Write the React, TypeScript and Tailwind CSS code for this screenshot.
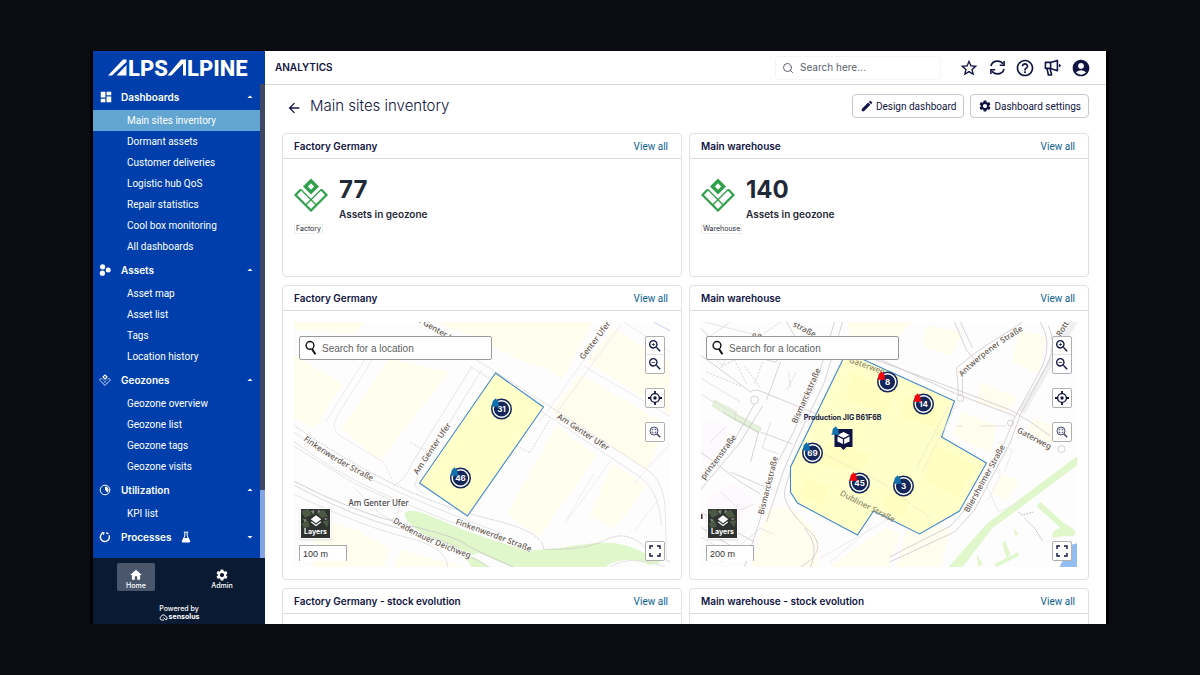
import { useState } from "react";
import type { ReactNode } from "react";
import {
    MdAccountCircle,
    MdArrowBack,
    MdArrowDropDown,
    MdArrowDropUp,
    MdDashboard,
    MdEdit,
    MdHelpOutline,
    MdHome,
    MdLayers,
    MdSettings,
    MdStarBorder,
    MdZoomIn,
    MdZoomOut,
} from "react-icons/md";
import { Search } from "lucide-react";

type NavGroup = {
    label: string;
    icon: ReactNode;
    items: string[];
    beta?: boolean;
};

function GeozoneIcon({ className, hole = "#fff" }: { className: string; hole?: string }) {
    return (
        <svg viewBox="0 0 34 34" className={className} fill="none" stroke="currentColor" aria-hidden="true">
            <path d="M17 .5 25 8.5 17 16.5 9 8.5Z" fill="currentColor" stroke="none" />
            <path d="M17 5.3 20.2 8.5 17 11.7 13.8 8.5Z" fill={hole} stroke="none" />
            <path d="M6.8 11.5 1.5 17 17 32.5 32.5 17 27.2 11.5" strokeWidth="2.2" />
            <path d="M6.8 11.5 22.5 27.2M27.2 11.5 11.5 27.2" strokeWidth="1.3" />
        </svg>
    );
}

function AssetsIcon() {
    return (
        <svg viewBox="0 0 12 12" className="size-3" fill="currentColor" aria-hidden="true">
            <circle cx="3.6" cy="2.8" r="2.6" />
            <circle cx="3.4" cy="9.2" r="2.6" />
            <circle cx="9.2" cy="6" r="2.5" />
        </svg>
    );
}

function UtilizationIcon() {
    return (
        <svg viewBox="0 0 12 12" className="size-3" fill="none" stroke="currentColor" aria-hidden="true">
            <circle cx="6" cy="6" r="4.8" />
            <path d="M6 2.4A3.6 3.6 0 0 1 8.5 8.6L6 6Z" fill="currentColor" stroke="none" />
        </svg>
    );
}

function ProcessesIcon() {
    return (
        <svg viewBox="0 0 12 12" className="size-3" fill="none" stroke="currentColor" strokeWidth="1.4" aria-hidden="true">
            <path d="M4.6 1.7A4.5 4.5 0 1 0 10 4.2" />
            <path d="M2.6 1.2 5.2 1.6 4.4 4" strokeWidth="1" />
            <path d="M7.2 1.6 9.4 2.8" />
        </svg>
    );
}

function FlaskIcon() {
    return (
        <svg viewBox="0 0 10 12" className="h-3 w-2.5" fill="none" stroke="currentColor" aria-hidden="true">
            <path d="M2.8 1.2H7.2M3.8 1.2V5L1.2 10.2Q1 11 1.8 11H8.2Q9 11 8.8 10.2L6.2 5V1.2" />
            <path d="M2.6 7H7.4L9 10.2Q9 11 8.2 11H1.8Q1 11 1 10.2Z" fill="currentColor" stroke="none" />
        </svg>
    );
}

function SyncIcon() {
    return (
        <svg viewBox="0 0 18 18" className="size-[17px]" fill="none" stroke="currentColor" strokeWidth="1.7" aria-hidden="true">
            <path d="M2 7.4C3 4.2 5.7 2.2 9 2.2c2.4 0 4.4 1 5.8 3M16 10.6c-1 3.2-3.7 5.2-7 5.2-2.4 0-4.4-1-5.8-3" />
            <path d="M11.4 6.6H16V2M6.6 11.4H2V16" />
        </svg>
    );
}

function MegaphoneIcon() {
    return (
        <svg viewBox="0 0 18 18" className="size-[18px]" fill="none" stroke="currentColor" strokeWidth="1.6" strokeLinejoin="round" aria-hidden="true">
            <path d="M1.4 3.4H6.6L13.4 1.4V11.8L6.6 9.4H1.4Z" />
            <path d="M6.6 3.4V9.4M3 9.4 4.4 16H7.6L6 9.4" />
            <path d="M15.4 5.2Q17.4 6.6 15.4 8Z" fill="currentColor" strokeWidth="1" />
        </svg>
    );
}

function LocateIcon() {
    return (
        <svg viewBox="0 0 14 14" className="size-3.5" fill="none" stroke="currentColor" aria-hidden="true">
            <circle cx="7" cy="7" r="4.4" strokeWidth="1.4" />
            <circle cx="7" cy="7" r="1.7" fill="currentColor" stroke="none" />
            <path d="M7 0V3M7 11V14M0 7H3M11 7H14" strokeWidth="1.8" />
        </svg>
    );
}

function FitIcon() {
    return (
        <svg viewBox="0 0 12 12" className="size-3" fill="none" stroke="#33385c" aria-hidden="true">
            <circle cx="5" cy="5" r="4" strokeWidth=".9" />
            <path d="M8 8 11.2 11.2" strokeWidth="1.4" />
            <path d="M3.2 4.4V3.2H4.4M5.6 3.2H6.8V4.4M6.8 5.6V6.8H5.6M4.4 6.8H3.2V5.6" strokeWidth=".9" />
        </svg>
    );
}

function FullscreenIcon() {
    return (
        <svg viewBox="0 0 12 12" className="size-3" fill="none" stroke="currentColor" strokeWidth="1.4" aria-hidden="true">
            <path d="M1 4V1H4M8 1H11V4M11 8V11H8M4 11H1V8" />
        </svg>
    );
}

function BrandLogo() {
    return (
        <svg viewBox="0 0 142 34" className="h-[34px] w-[142px]" fill="#fff" role="img" aria-label="ALPSALPINE">
            <path d="M0 24.5 15 8.5H18.5V11L4 24.5Z" />
            <path d="M8.5 24.5 18.5 14V24.5Z" />
            <path d="M59.5 24.5 73 8.5H78V24.5H75V12.5L63.5 24.5Z" />
            <text x="20" y="24.5" className="font-['Roboto'] text-[22px] font-extrabold">LPS</text>
            <text x="79" y="24.5" className="font-['Roboto'] text-[22px] font-extrabold">LPINE</text>
        </svg>
    );
}

const navGroups: NavGroup[] = [
    {
        label: "Dashboards",
        icon: <MdDashboard className="size-3.5" />,
        items: [
            "Main sites inventory",
            "Dormant assets",
            "Customer deliveries",
            "Logistic hub QoS",
            "Repair statistics",
            "Cool box monitoring",
            "All dashboards",
        ],
    },
    { label: "Assets", icon: <AssetsIcon />, items: ["Asset map", "Asset list", "Tags", "Location history"] },
    {
        label: "Geozones",
        icon: <GeozoneIcon className="size-3" hole="#003fab" />,
        items: ["Geozone overview", "Geozone list", "Geozone tags", "Geozone visits"],
    },
    { label: "Utilization", icon: <UtilizationIcon />, items: ["KPI list"] },
    { label: "Processes", icon: <ProcessesIcon />, items: [], beta: true },
];

function Sidebar() {
    const [active, setActive] = useState("Main sites inventory");

    return (
        <aside className="flex w-[172px] shrink-0 flex-col bg-[#003fab] text-white">
            <div className="flex h-[33px] shrink-0 items-center pl-[15px]">
                <BrandLogo />
            </div>
            <div className="flex min-h-0 flex-1">
                <nav className="min-w-0 flex-1 overflow-hidden">
                    {navGroups.map((group) => (
                        <section key={group.label}>
                            <button type="button" className="flex h-[26px] w-full items-center pr-1 pl-1.5 text-left text-[10px] font-semibold">
                                <span className="flex w-[22px] items-center">{group.icon}</span>
                                {group.label}
                                {group.beta && (
                                    <span className="ml-2.5">
                                        <FlaskIcon />
                                    </span>
                                )}
                                <span className="ml-auto">
                                    {group.beta ? <MdArrowDropDown className="size-3" /> : <MdArrowDropUp className="size-3" />}
                                </span>
                            </button>
                            <ul>
                                {group.items.map((item) => (
                                    <li key={item}>
                                        <a
                                            href="#"
                                            onClick={() => setActive(item)}
                                            className={`flex h-[21px] items-center pl-[34px] font-['Roboto',sans-serif] text-[10px] ${item === active ? "bg-[#62a5d1]" : ""}`}
                                        >
                                            {item}
                                        </a>
                                    </li>
                                ))}
                            </ul>
                        </section>
                    ))}
                </nav>
                <div className="flex w-[5px] flex-col bg-[#84a4e6]">
                    <div className="h-6/7 bg-[#3e4763]" />
                </div>
            </div>
            <div className="flex h-[66px] shrink-0 flex-col bg-[#0b1a33] pt-[5px]">
                <div className="grid grid-cols-2 justify-items-center text-[7px] leading-[8px] font-medium">
                    <button type="button" className="flex h-7 w-[38px] flex-col items-center justify-center rounded-xs bg-[#4a566c] pt-1">
                        <MdHome className="size-3.5" />
                        Home
                    </button>
                    <button type="button" className="flex h-7 w-[38px] flex-col items-center justify-center pt-1">
                        <MdSettings className="size-3.5" />
                        Admin
                    </button>
                </div>
                <div className="mt-auto flex flex-col items-center pb-[3px] text-[7px] leading-[8px] font-medium">
                    Powered by
                    <span className="flex items-center gap-px font-bold">
                        <svg viewBox="0 0 9 7" className="h-[7px] w-[9px]" fill="none" stroke="currentColor" aria-hidden="true">
                            <path d="M5 6H2.4A1.8 1.8 0 0 1 2.2 2.6 2.3 2.3 0 0 1 6.6 2.4 1.9 1.9 0 0 1 7 6L4.4 3.6" />
                        </svg>
                        sensolus
                    </span>
                </div>
            </div>
        </aside>
    );
}

function TopBar() {
    return (
        <header className="flex h-[34px] shrink-0 items-center border-b border-[#d3d5da] pr-[15px] pl-2.5">
            <h2 className="text-[10px] font-semibold">ANALYTICS</h2>
            <label className="ml-auto flex h-6 w-[166px] items-center gap-1.5 rounded border border-[#f3f4f6] px-1.5 text-[#5b5f6b]">
                <Search className="size-3" strokeWidth={2} />
                <input
                    type="text"
                    aria-label="Search"
                    placeholder="Search here..."
                    className="min-w-0 flex-1 text-[10px] outline-none placeholder:text-[#5b5f6b]"
                />
            </label>
            <div className="ml-[18px] flex items-center gap-2">
                <button type="button" aria-label="Favourites" className="flex size-5 items-center justify-center">
                    <MdStarBorder className="size-5" />
                </button>
                <button type="button" aria-label="Refresh" className="flex size-5 items-center justify-center">
                    <SyncIcon />
                </button>
                <button type="button" aria-label="Help" className="flex size-5 items-center justify-center">
                    <MdHelpOutline className="size-5" />
                </button>
                <button type="button" aria-label="Announcements" className="flex size-5 items-center justify-center">
                    <MegaphoneIcon />
                </button>
                <button type="button" aria-label="Account" className="flex size-5 items-center justify-center">
                    <MdAccountCircle className="size-5" />
                </button>
            </div>
        </header>
    );
}

function Card({ title, children }: { title: string; children?: ReactNode }) {
    return (
        <section className="rounded border border-[#dfe1e6] bg-white">
            <div className="flex h-[25px] items-center justify-between border-b border-[#d9dbe0] pr-[13px] pl-[11px] text-[10px]">
                <h3 className="font-semibold">{title}</h3>
                <a href="#" className="font-['Roboto',sans-serif] text-[#0b6190]">View all</a>
            </div>
            {children}
        </section>
    );
}

function CountWidget({ count, geozone }: { count: number; geozone: string }) {
    return (
        <div className="flex h-[117px] gap-[11px] pt-[19px] pl-[11px] text-[#1f2937]">
            <div className="flex w-[34px] flex-col items-start gap-3">
                <GeozoneIcon className="size-[34px] text-[#2fa04a]" />
                <span className="border border-[#f0f0ea] px-px text-[7px] leading-[8px]">{geozone}</span>
            </div>
            <div>
                <p className="text-2xl leading-6 font-bold">{count}</p>
                <p className="mt-1.5 text-[10px] leading-3 font-semibold">Assets in geozone</p>
            </div>
        </div>
    );
}

function Bell({ x, y, alert }: { x: number; y: number; alert?: boolean }) {
    return (
        <path
            d={`M${x} ${y - 4.5}q.9 0 .9 .9 2.2 .7 2.2 3.2v2.2l.9 1.2v.8h-8v-.8l.9-1.2v-2.2q0-2.5 2.2-3.2 0-.9 .9-.9z`}
            fill={alert ? "#f5060a" : "#1071ae"}
        />
    );
}

function Marker({ x, y, label, alert }: { x: number; y: number; label: string; alert?: boolean }) {
    return (
        <g>
            <circle cx={x} cy={y} r="10.5" fill="#14265a" />
            <circle cx={x} cy={y} r="8.3" fill="none" stroke="#fff" strokeWidth="1.4" />
            <text x={x} y={y + 3} textAnchor="middle" fill="#fff" className="text-[8px] font-bold">{label}</text>
            <Bell x={x - 6} y={y - 6} alert={alert} />
        </g>
    );
}

function MapFrame({ name, scale, children }: { name: string; scale: string; children: ReactNode }) {
    return (
        <div className="relative m-[11px] mb-3 h-[245px] overflow-hidden">
            <svg viewBox="0 0 377 245" preserveAspectRatio="xMidYMid slice" className="size-full bg-[#fefdfd]" role="img" aria-label={`${name} map`}>
                {children}
            </svg>
            <label className="absolute top-3.5 left-[5px] flex h-6 w-[193px] items-center gap-1 rounded-xs border border-[#9a9a9a] bg-white px-1 text-[#111]">
                <svg viewBox="0 0 14 16" className="h-4 w-3.5" fill="none" stroke="currentColor" aria-hidden="true">
                    <circle cx="6" cy="5.4" r="3.9" strokeWidth="1.4" />
                    <path d="M8 9 11.4 14.2" strokeWidth="2" />
                </svg>
                <input
                    type="text"
                    aria-label={`Search for a location in ${name}`}
                    placeholder="Search for a location"
                    className="min-w-0 flex-1 font-['Liberation_Sans',sans-serif] text-[10px] outline-none placeholder:text-[#5f5f5f]"
                />
            </label>
            <div className="absolute top-3.5 right-[5px] flex flex-col gap-3.5">
                <div className="flex w-5 flex-col divide-y divide-[#e5e5e5] rounded-xs border border-[#b0b0b0] bg-white">
                    <button type="button" aria-label="Zoom in" className="flex h-[18px] items-center justify-center">
                        <MdZoomIn className="size-4" />
                    </button>
                    <button type="button" aria-label="Zoom out" className="flex h-[18px] items-center justify-center">
                        <MdZoomOut className="size-4" />
                    </button>
                </div>
                <button type="button" aria-label="Show my location" className="flex size-5 items-center justify-center rounded-xs border border-[#b0b0b0] bg-white">
                    <LocateIcon />
                </button>
                <button type="button" aria-label="Fit to assets" className="flex size-5 items-center justify-center rounded-xs border border-[#b0b0b0] bg-white">
                    <FitIcon />
                </button>
            </div>
            <button
                type="button"
                className="absolute bottom-7 left-1.5 flex size-[31px] flex-col items-center justify-end border border-white bg-[#2f3330] text-[7px] leading-[8px] font-bold text-white shadow"
            >
                <svg viewBox="0 0 30 30" className="absolute inset-0 size-full" aria-hidden="true">
                    <path d="M0 2 8 0 11 6 4 9ZM16 3 24 1 28 8 21 9ZM1 15 7 12 9 18 3 20ZM22 13 29 12 27 19Z" fill="#4c5a45" />
                    <path d="M10 2 14 1 13 6ZM2 10 6 11 4 14ZM24 9 28 10 25 12ZM18 0 20 3 17 4Z" fill="#87877f" />
                </svg>
                <MdLayers className="relative size-3.5" />
                <span className="relative pb-0.5">Layers</span>
            </button>
            <div className="absolute bottom-1.5 left-[5px] h-4 w-12 border border-b-0 border-[#a9a9a9] bg-white pl-[3px] font-['Liberation_Sans',sans-serif] text-[9px] leading-4 text-[#333]">
                {scale}
            </div>
            <button type="button" aria-label="Full screen" className="absolute right-[5px] bottom-1.5 flex size-5 items-center justify-center rounded-xs border border-[#b0b0b0] bg-white">
                <FullscreenIcon />
            </button>
        </div>
    );
}

function FactoryMap() {
    return (
        <MapFrame name="Factory Germany" scale="100 m">
            <g fill="#fffdee">
                <path d="M0 0H72L60 12 0 8ZM0 33 49 62 22 106 0 96ZM96 37 156 50 86 139 48 107Z" />
                <path d="M20 195 66 209 96 227 90 245H20ZM108 228 170 245H100Z" />
                <path d="M140 0H299L269 57 258 50 250 46 236 42 200 26 186 17Z" />
                <path d="M319 7 377 40V92L293 40ZM286 52 372 102 354 148 258 90Z" />
                <path d="M263 104 303 134 246 215 213 192ZM319 142 353 164 321 207 296 194Z" />
            </g>
            <path d="M111 193C112 187 122 188 135 193L168 207C195 217 230 229 245 228 275 226 296 219 318 221 340 223 354 232 368 241L356 243Q336 234 318 241L312 245H218L186 231 170 235Q176 240 178 245L196 245 186 238 150 222Q116 208 111 193Z" fill="#e0f6cb" />
            <g fill="none" stroke="#e0dddd" strokeWidth=".8">
                <path d="M0 103Q50 138 100 162T200 198 250 227Q290 229 312 218T352 226L377 240" stroke="#c4bfbf" strokeDasharray="2 1" />
                <path d="M0 110Q50 146 105 170T210 212" />
                <path d="M0 119Q40 150 90 172T180 208" />
                <path d="M0 124 60 161 100 179Q108 183 104 192" />
                <path d="M0 159Q60 190 110 202T170 221T220 245" stroke="#c6c6c6" />
                <path d="M0 163Q60 195 108 207T166 227 196 245" stroke="#d0d0d0" />
                <path d="M0 172Q70 205 112 215T154 245" />
                <path d="M60 165Q70 175 80 186T120 206" />
                <path d="M178 45 118 142Q112 158 100 164M188 48 126 150 121 164 130 172" />
                <path d="M90 20 46 90Q34 108 50 116L90 140 100 160M84 17 32 100" stroke="#e9e5eb" />
                <path d="M180 36 262 88 354 148Q372 160 372 195L373 240" />
                <path d="M176 44 258 96 348 156Q366 170 368 204" />
                <path d="M318 0 246 100M328 2 262 92M290 44 376 94M236 75 170 160" stroke="#e9e5eb" />
                <path d="M256 98 236 131 224 124" stroke="#ccc5b5" strokeDasharray="1.5 1.5" />
                <path d="M318 138 274 198M376 122 340 162M366 176 340 210M300 152 272 200" stroke="#ece9ee" />
                <path d="M116 120 136 131" stroke="#c9c2c2" strokeDasharray="1.5 1.5" />
                <path d="M330 0 377 30" stroke="#e9e5eb" />
                <path d="M360 0 377 9" stroke="#b9c8f2" />
                <path d="M316 245Q338 232 372 245" />
            </g>
            <path d="M202 51 250 85 174 194 126 161Z" fill="#ffffc9" stroke="#4389ce" strokeWidth="1.1" />
            <g fill="none">
                <path id="f-street-1" d="M10 118Q40 141 100 170" />
                <path id="f-street-2" d="M162 202Q200 215 260 239" />
                <path id="f-street-3" d="M99 200Q130 222 200 244" />
            </g>
            <g fill="#62544b" stroke="#fff" strokeWidth="1.5" paintOrder="stroke" className="font-['Noto_Sans',sans-serif] text-[8px] font-medium">
                <text><textPath href="#f-street-1">Finkenwerder Straße</textPath></text>
                <text><textPath href="#f-street-2">Finkenwerder Straße</textPath></text>
                <text><textPath href="#f-street-3">Dradenauer Deichweg</textPath></text>
                <text transform="translate(124 153) rotate(-56)">Am Genter Ufer</text>
                <text transform="translate(55 184)" fill="#444">Am Genter Ufer</text>
                <text transform="translate(263 96) rotate(33)">Am Genter Ufer</text>
                <text transform="translate(290 38) rotate(-53)">Genter Ufer</text>
                <text transform="translate(116 -5) rotate(30)">Am Genter Ufer</text>
            </g>
            <Marker x={208} y={87} label="31" />
            <Marker x={167} y={156} label="46" />
        </MapFrame>
    );
}

function WarehouseMap() {
    return (
        <MapFrame name="Main warehouse" scale="200 m">
            <g fill="#fffdee">
                <path d="M66 190Q90 176 104 200 124 210 116 245H50ZM130 245 160 222 186 206 200 212 188 245Z" />
                <path d="M146 0H210L196 20 150 14ZM226 4 262 10 250 34 222 24ZM280 60 318 76 306 90 276 80Z" />
                <path d="M318 8 346 14 338 52 312 40ZM208 200 250 206 240 245H196ZM262 90 296 104 290 132 252 112Z" />
                <path d="M300 152 318 158 306 180 292 172ZM332 96 360 106 352 122 326 112Z" />
            </g>
            <path d="M0 100H24L34 126 0 140ZM6 176 30 160 54 178 40 200 14 196Z" fill="#fdf9fc" />
            <g fill="#e0f6cb">
                <path d="M14 78 36 90 34 98 12 84ZM36 92 61 106 58 111 34 98Z" fill="#e4f4da" stroke="#c6d9b9" strokeWidth=".7" strokeDasharray="1.5 1" />
                <path d="M377 134V143L322 184 292 206 262 245H248L286 202 318 178Z" />
                <path d="M340 180 362 200 374 208Q378 216 364 214L352 216Q350 208 360 206L336 184ZM304 218 310 232 306 236 302 222ZM313 206 318 212 315 214ZM294 242 318 230V234L296 245ZM276 232 282 242 278 245Z" />
            </g>
            <path d="M370 223 377 221V245H359Z" fill="#91bdf1" />
            <path d="M366 0H377L324 92 318 88 344 46Z" fill="#efefef" />
            <g fill="none" stroke="#cdc7cc" strokeWidth=".8">
                <path d="M134 0 116 60 92 112 72 150 60 196 44 245M142 0 124 60 100 110 84 146 66 200" />
                <path d="M120 84Q82 160 84 174T108 208 100 245M104 206Q120 224 110 245" />
                <path d="M0 33 50 70Q54 66 62 70L116 92M0 6 18 24 74 40 100 24 86 0M62 84 40 120 0 168M54 82 34 118 0 158" />
                <circle cx="54" cy="78" r="4" />
                <path d="M66 78 80 40M22 90 58 110 50 140M60 110 92 122M30 150 72 168M0 130 40 160 60 172M0 205 40 230M0 190 54 220" />
                <path d="M44 44 60 66M62 40 54 62M6 50 40 64M20 170 40 188 54 182M14 36 22 44 34 38 46 62" strokeDasharray="2 1.5" />
                <path d="M88 50 90 66M86 68 96 50M20 46 30 30 60 10M10 14 30 0M0 56 40 80M4 0 60 14 80 0M0 72 44 98M70 100 62 126 78 132M0 215 36 236M20 240 60 206 72 212M10 120 26 104M34 186 24 200 8 190" stroke="#e0dbe2" />
                <path d="M154 30 252 66 310 88 330 100 350 114M150 24 256 72 314 94" />
                <circle cx="260" cy="76" r="3.5" />
                <circle cx="310" cy="101" r="3" />
                <circle cx="361" cy="127" r="3.5" />
                <path d="M258 72 256 46 276 30 322 0M262 72 262 50 284 30M254 0 266 28 276 40M260 0 272 26" />
                <path d="M340 0Q352 20 342 44L314 96 304 120 268 184 250 204 189 235M348 4Q356 20 348 40L320 92 310 120 274 188 254 210 189 240" />
                <path d="M256 104H262M280 104H306" stroke="#bbb" strokeDasharray="1 1" />
                <path d="M280 140 300 152 288 178M296 120 312 128 304 150M280 150 298 190 320 180" stroke="#e8e4e4" />
                <path d="M130 240 170 206M120 236 190 196M189 50 160 120" stroke="#e8e4e4" />
                <path d="M318 190 322 193 333 190M324 196 334 206 342 219" stroke="#b5a99d" strokeDasharray="2 1" />
            </g>
            <path
                d="M146 30 199 54 254 79 241 115 286 141 259 189 219 212 173 189 157 213 97 181 90 170V145Z"
                fill="#ffffc9"
                stroke="#4389ce"
                strokeWidth="1.1"
            />
            <g fill="#fffdc0">
                <path d="M150 50 196 68 186 92 146 78ZM204 74 240 88 234 104 200 96ZM128 120 170 132 160 150 118 142Z" />
                <path d="M232 122 276 144 256 176 224 158ZM186 170 210 176 204 196 182 186ZM104 156 130 164 122 184 100 174Z" />
            </g>
            <path d="M248 84 216 146M254 86 222 150M100 120 180 160 230 196" fill="none" stroke="#eeeac8" strokeWidth=".8" />
            <rect x="0" y="192" width="2" height="5" fill="#472c3c" />
            <path id="w-street-1" d="M262 55Q282 32 330 4" fill="none" />
            <g fill="#62544b" stroke="#fff" strokeWidth="1.5" paintOrder="stroke" className="font-['Noto_Sans',sans-serif] text-[8px] font-medium">
                <text><textPath href="#w-street-1">Antwerpener Straße</textPath></text>
                <text transform="translate(96 102) rotate(-66)">Bismarckstraße</text>
                <text transform="translate(63 193) rotate(-76)">Bismarckstraße</text>
                <text transform="translate(4 158) rotate(-53)">prinzenstraße</text>
                <text transform="translate(92 4) rotate(28)">straße</text>
                <text transform="translate(45 20) rotate(-15)">raße</text>
                <text transform="translate(316 110) rotate(28)">Gaterweg</text>
                <text transform="translate(268 191) rotate(-61)">Bliersheimer Straße</text>
                <text transform="translate(360 15) rotate(-58)">Rotterdamer</text>
            </g>
            <g fill="#8b856a" className="font-['Noto_Sans',sans-serif] text-[8px] font-medium">
                <text transform="translate(148 40) rotate(20)">Gaterweg</text>
                <text transform="translate(139 173) rotate(27)">Dubliner Straße</text>
            </g>
            <text x="142" y="98" textAnchor="middle" fill="#0f1442" className="text-[7px] font-bold">Production JIG B61F6B</text>
            <path d="M134 107H152V125H146L143 128 140 125H134Z" fill="#0f1442" />
            <path d="M143 110 149 113 143 116 137 113ZM137 114.5 142.4 117.2V122L137 119.4ZM149 114.5 143.6 117.2V122L149 119.4Z" fill="#fff" />
            <Bell x={135} y={109} />
            <Marker x={187} y={60} label="8" alert />
            <Marker x={223} y={82} label="14" alert />
            <Marker x={112} y={131} label="69" />
            <Marker x={159} y={161} label="45" alert />
            <Marker x={203} y={164} label="3" />
        </MapFrame>
    );
}

export default function App() {
    return (
        <div className="flex h-screen bg-[#0b0c11] pt-[51px] pr-[91px] pb-[51px] pl-[90px] font-['Inter',sans-serif] text-[#0f1442]">
            <div className="flex min-w-0 flex-1 overflow-hidden border-x-[3px] border-black bg-white">
                <Sidebar />
                <div className="flex min-w-0 flex-1 flex-col">
                    <TopBar />
                    <main className="min-h-0 flex-1 overflow-hidden px-[17px] pt-[9px]">
                        <div className="mb-[15px] flex h-6 items-center gap-1.5 font-['Roboto',sans-serif] text-[10px]">
                            <a href="#" aria-label="Back" className="ml-1 pt-1">
                                <MdArrowBack className="size-4" />
                            </a>
                            <h1 className="ml-0.5 font-['Inter',sans-serif] text-[15px] font-light">Main sites inventory</h1>
                            <button type="button" className="ml-auto flex h-6 items-center gap-0.5 rounded border border-[#c5c8d2] px-[7px]">
                                <MdEdit className="size-3.5" />
                                Design dashboard
                            </button>
                            <button type="button" className="flex h-6 items-center gap-0.5 rounded border border-[#c5c8d2] px-[7px]">
                                <MdSettings className="size-3.5" />
                                Dashboard settings
                            </button>
                        </div>
                        <div className="grid grid-cols-2 gap-x-[7px] gap-y-2">
                            <Card title="Factory Germany">
                                <CountWidget count={77} geozone="Factory" />
                            </Card>
                            <Card title="Main warehouse">
                                <CountWidget count={140} geozone="Warehouse" />
                            </Card>
                            <Card title="Factory Germany">
                                <FactoryMap />
                            </Card>
                            <Card title="Main warehouse">
                                <WarehouseMap />
                            </Card>
                            <Card title="Factory Germany - stock evolution">
                                <div className="h-40" />
                            </Card>
                            <Card title="Main warehouse - stock evolution">
                                <div className="h-40" />
                            </Card>
                        </div>
                    </main>
                </div>
            </div>
        </div>
    );
}
